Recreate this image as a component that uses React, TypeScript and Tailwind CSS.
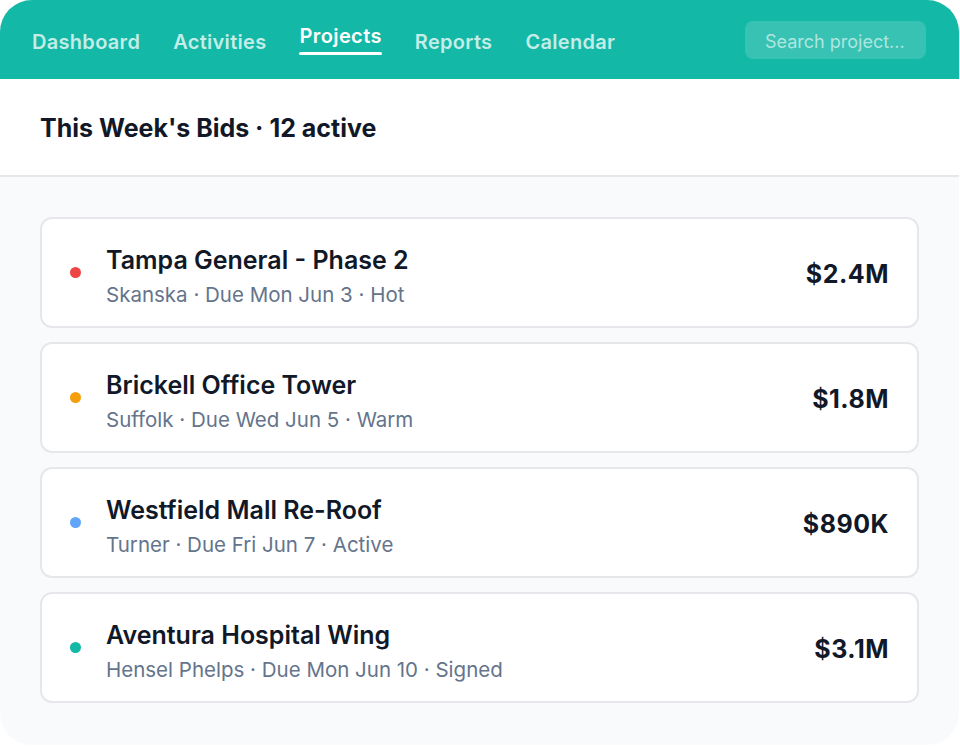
import React from 'react';

const bids = [
  { id: 1, name: 'Tampa General - Phase 2', meta: 'Skanska · Due Mon Jun 3 · Hot', amount: '$2.4M', dot: 'bg-[#ef4444]' },
  { id: 2, name: 'Brickell Office Tower', meta: 'Suffolk · Due Wed Jun 5 · Warm', amount: '$1.8M', dot: 'bg-[#f59e0b]' },
  { id: 3, name: 'Westfield Mall Re-Roof', meta: 'Turner · Due Fri Jun 7 · Active', amount: '$890K', dot: 'bg-[#60a5fa]' },
  { id: 4, name: 'Aventura Hospital Wing', meta: 'Hensel Phelps · Due Mon Jun 10 · Signed', amount: '$3.1M', dot: 'bg-[#14b8a6]' },
];

const tabs = ['Dashboard', 'Activities', 'Projects', 'Reports', 'Calendar'];

export default function App() {
  return (
    <div className="bg-white min-h-screen" style={{ fontFamily: 'Inter, "Noto Sans", sans-serif' }}>
      <div className="h-[745px] w-[959px] rounded-[32px] overflow-hidden bg-[#f8fafc] flex flex-col">
        <header className="h-[79px] bg-[#14b8a6] flex items-center justify-between pl-[32px] pr-[33px] shrink-0">
          <nav className="flex items-center gap-[33px] pt-[4px]">
            {tabs.map((t) =>
              t === 'Projects' ? (
                <span key={t} className="flex flex-col items-center -mt-[6px]">
                  <span className="text-[20px] font-semibold text-white tracking-[0.4px] leading-[26px]">{t}</span>
                  <span className="mt-[3px] h-[3px] w-full bg-white rounded-full" />
                </span>
              ) : (
                <span key={t} className="text-[20px] font-semibold text-white/75 tracking-[0.3px] leading-[26px]">
                  {t}
                </span>
              )
            )}
          </nav>
          <div className="w-[181px] h-[38px] rounded-[8px] bg-white/15 flex items-center px-[20px] pt-[3px] text-[18px] text-white/60">
            Search project...
          </div>
        </header>

        <div className="h-[98px] bg-white border-b-2 border-[#e5e7eb] flex items-center px-[40px] pt-[4px] shrink-0">
          <h1 className="text-[25px] font-bold text-[#111827]">This Week's Bids · 12 active</h1>
        </div>

        <div className="flex flex-col gap-[14px] pt-[40px] pl-[40px] pr-[40px]">
          {bids.map((b) => (
            <div
              key={b.id}
              className="h-[111px] bg-white border-2 border-[#e5e7eb] rounded-[12px] flex items-center pl-[28px] pr-[28px]"
            >
              <span className={`w-[11px] h-[11px] rounded-full ${b.dot} shrink-0`} />
              <div className="ml-[25px] flex-1 flex flex-col pt-[8px]">
                <span className="text-[25px] font-semibold text-[#111827] leading-[30px]">{b.name}</span>
                <span className="text-[20.5px] text-[#64748b] leading-[28px] mt-[6px]">{b.meta}</span>
              </div>
              <span className="text-[25px] font-bold text-[#111827] tracking-[0.5px] pt-[5px]">{b.amount}</span>
            </div>
          ))}
        </div>
      </div>
    </div>
  );
}
